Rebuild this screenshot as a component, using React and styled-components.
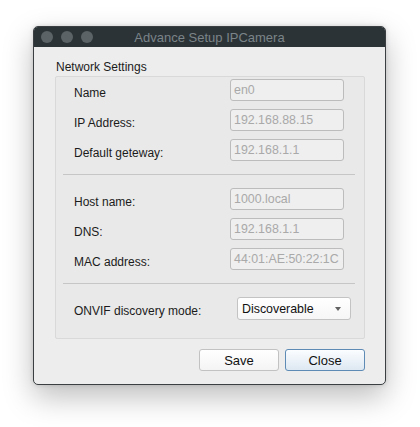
import React from 'react'
import styled, { createGlobalStyle } from 'styled-components'

const GlobalStyle = createGlobalStyle`
  html, body {
    margin: 0;
    padding: 0;
    background: #ffffff;
  }
  body {
    font-family: "Liberation Sans", Arial, sans-serif;
    font-size: 12px;
    color: #1b1b1b;
  }
`

const Page = styled.div`
  width: 420px;
  height: 427px;
  padding: 26px 0 0 33px;
  box-sizing: border-box;
`

const Window = styled.div`
  width: 353px;
  height: 359px;
  box-sizing: border-box;
  border: 1px solid #3b3f42;
  border-radius: 5px;
  background: #ededed;
  overflow: hidden;
  display: flex;
  flex-direction: column;
  box-shadow: 0 12px 30px rgba(0, 0, 0, 0.26), 0 0 5px rgba(0, 0, 0, 0.14);
`

const TitleBar = styled.div`
  position: relative;
  height: 20px;
  flex: none;
  background: #2b3337;
  display: flex;
  align-items: center;
  justify-content: center;
  font-size: 13px;
  color: #7b8488;
`

const Lights = styled.div`
  position: absolute;
  left: 7px;
  top: 4px;
  display: flex;
  gap: 8px;
`

const Light = styled.span`
  width: 12px;
  height: 12px;
  border-radius: 50%;
  background: #5b6367;
`

const Body = styled.div`
  padding: 13px 20px 0 21px;
  display: flex;
  flex-direction: column;
`

const GroupTitle = styled.div`
  height: 14px;
  line-height: 14px;
  margin: 0 0 2px 1px;
`

const GroupBox = styled.div`
  height: 263px;
  box-sizing: border-box;
  border: 1px solid #d9d9d9;
  border-radius: 2px;
  background: #e9e9e9;
  padding-top: 2px;
  display: flex;
  flex-direction: column;
`

const Section = styled.div`
  display: flex;
  flex-direction: column;
  gap: 8px;
`

const Row = styled.div`
  display: flex;
  align-items: center;
  justify-content: space-between;
  height: ${p => p.$h || 22}px;
  padding: 0 ${p => p.$right || 20}px 0 18px;
`

const Label = styled.span`
  padding-top: 5px;
`

const Field = styled.div`
  width: 114px;
  height: 22px;
  box-sizing: border-box;
  border: 1px solid #bcbcbc;
  border-radius: 3px;
  background: #efefef;
  color: #a9a9a9;
  padding: 0 3px;
  display: flex;
  align-items: center;
  font-size: 12.4px;
  white-space: nowrap;
  overflow: hidden;
`

const Divider = styled.div`
  height: 1px;
  background: #c6c6c6;
  margin: 13px 9px 13px 7px;
`

const Select = styled.div`
  width: 114px;
  height: 23px;
  box-sizing: border-box;
  border: 1px solid #c3c3c3;
  border-radius: 3px;
  background: linear-gradient(#ffffff, #f6f6f6);
  padding: 0 9px 0 4px;
  display: flex;
  align-items: center;
  justify-content: space-between;
  font-size: 12.4px;
  color: #111;
`

const Caret = styled.span`
  width: 0;
  height: 0;
  margin-top: 1px;
  border-left: 3.5px solid transparent;
  border-right: 3.5px solid transparent;
  border-top: 4px solid #626262;
`

const Buttons = styled.div`
  display: flex;
  justify-content: flex-end;
  gap: 6px;
  margin-top: 10px;
`

const Button = styled.div`
  width: 80px;
  height: 22px;
  box-sizing: border-box;
  border: 1px solid ${p => (p.$primary ? '#5d8bb6' : '#c2c2c2')};
  border-radius: 3px;
  background: ${p =>
    p.$primary ? 'linear-gradient(#fbfdff, #dde8f2)' : 'linear-gradient(#ffffff, #f4f4f4)'};
  display: flex;
  align-items: center;
  justify-content: center;
  font-size: 13px;
  color: #111;
`

const network = [
  ['Name', 'en0'],
  ['IP Address:', '192.168.88.15'],
  ['Default geteway:', '192.168.1.1']
]

const host = [
  ['Host name:', '1000.local'],
  ['DNS:', '192.168.1.1'],
  ['MAC address:', '44:01:AE:50:22:1C']
]

const FieldRows = ({ items }) => (
  <Section>
    {items.map(([label, value]) => (
      <Row key={label}>
        <Label>{label}</Label>
        <Field>{value}</Field>
      </Row>
    ))}
  </Section>
)

export default function App() {
  return (
    <>
      <GlobalStyle />
      <Page>
        <Window>
          <TitleBar>
            <Lights>
              <Light />
              <Light />
              <Light />
            </Lights>
            Advance Setup IPCamera
          </TitleBar>
          <Body>
            <GroupTitle>Network Settings</GroupTitle>
            <GroupBox>
              <FieldRows items={network} />
              <Divider />
              <FieldRows items={host} />
              <Divider />
              <Row $h={23} $right={13}>
                <Label>ONVIF discovery mode:</Label>
                <Select>
                  Discoverable
                  <Caret />
                </Select>
              </Row>
            </GroupBox>
            <Buttons>
              <Button>Save</Button>
              <Button $primary>Close</Button>
            </Buttons>
          </Body>
        </Window>
      </Page>
    </>
  )
}
